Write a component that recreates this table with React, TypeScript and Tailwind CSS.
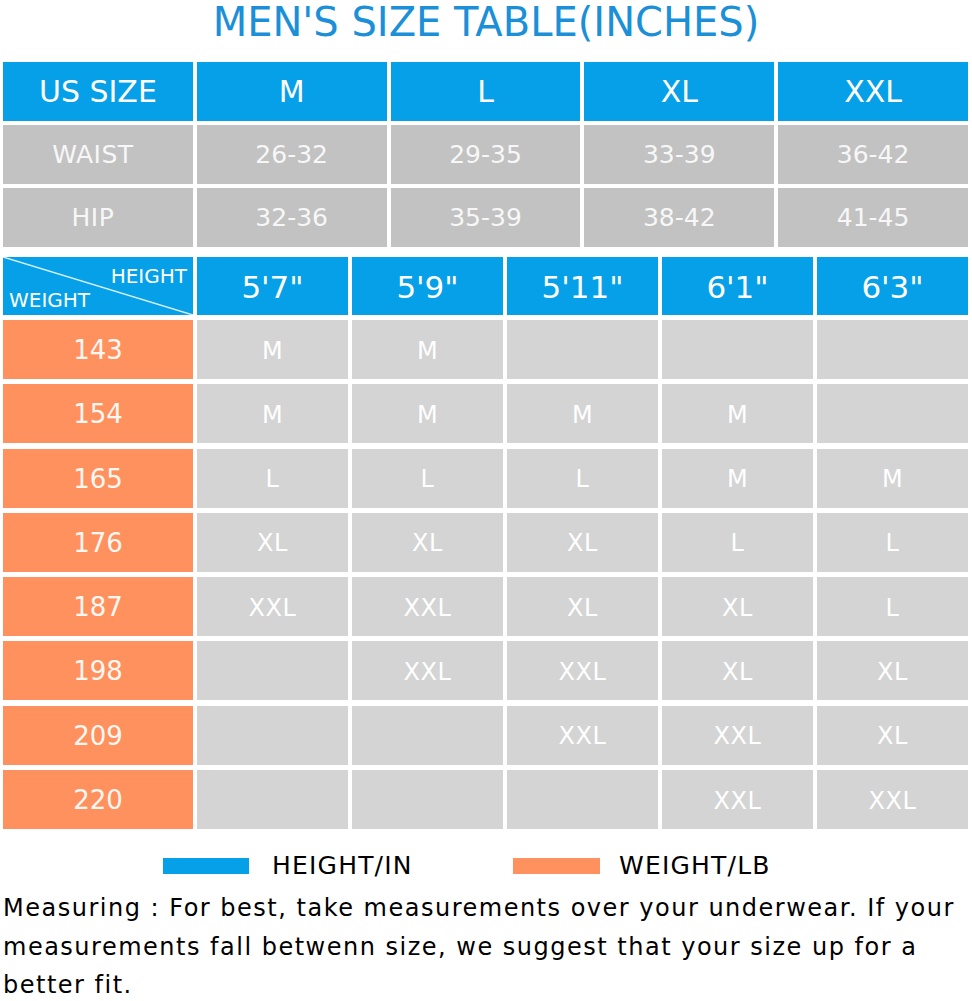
const sizes = ['M', 'L', 'XL', 'XXL']
const waist = ['26-32', '29-35', '33-39', '36-42']
const hip = ['32-36', '35-39', '38-42', '41-45']
const heights = [`5'7"`, `5'9"`, `5'11"`, `6'1"`, `6'3"`]

const chart: [string, string[]][] = [
  ['143', ['M', 'M', '', '', '']],
  ['154', ['M', 'M', 'M', 'M', '']],
  ['165', ['L', 'L', 'L', 'M', 'M']],
  ['176', ['XL', 'XL', 'XL', 'L', 'L']],
  ['187', ['XXL', 'XXL', 'XL', 'XL', 'L']],
  ['198', ['', 'XXL', 'XXL', 'XL', 'XL']],
  ['209', ['', '', 'XXL', 'XXL', 'XL']],
  ['220', ['', '', '', 'XXL', 'XXL']],
]

export default function App() {
  return (
    <div className="w-[972px] h-[1001px] bg-white overflow-hidden font-['DejaVu_Sans','Liberation_Sans',sans-serif]">
      {/* Title */}
      <h1 className="text-center text-[40px] leading-[44px] text-[#1b90d8]">
        MEN'S SIZE TABLE(INCHES)
      </h1>

      {/* Size measurements */}
      <div className="mt-[18px] ml-[3px] w-[965px] grid grid-cols-5 auto-rows-[59px] gap-x-[4px] gap-y-[4px]">
        <div className="bg-[#05a0e8] text-white text-[30px] flex items-center justify-center">US SIZE</div>
        {sizes.map((s) => (
          <div key={s} className="bg-[#05a0e8] text-white text-[30px] flex items-center justify-center">
            {s}
          </div>
        ))}
        <div className="bg-[#c2c2c2] text-[#f7f7f7] text-[25px] tracking-[0.5px] flex items-center justify-center pr-[10px]">WAIST</div>
        {waist.map((w) => (
          <div key={w} className="bg-[#c2c2c2] text-[#f7f7f7] text-[25px] flex items-center justify-center">
            {w}
          </div>
        ))}
        <div className="bg-[#c2c2c2] text-[#f7f7f7] text-[25px] tracking-[0.5px] flex items-center justify-center pr-[10px]">HIP</div>
        {hip.map((h) => (
          <div key={h} className="bg-[#c2c2c2] text-[#f7f7f7] text-[25px] flex items-center justify-center">
            {h}
          </div>
        ))}
      </div>

      {/* Height / weight chart */}
      <div className="mt-[10px] ml-[3px] w-[965px] grid grid-cols-[190px_repeat(5,1fr)] gap-x-[4px]">
        <div className="relative h-[58px] bg-[#05a0e8] text-white text-[20px] leading-[24px] flex flex-col pt-[7px] px-[6px]">
          <svg className="absolute inset-0" width="190" height="58" viewBox="0 0 190 58">
            <line x1="0" y1="0" x2="190" y2="58" stroke="#d6effc" strokeWidth="1.5" />
          </svg>
          <span className="self-end">HEIGHT</span>
          <span className="self-start">WEIGHT</span>
        </div>
        {heights.map((h) => (
          <div key={h} className="h-[58px] bg-[#05a0e8] text-white text-[31px] flex items-center justify-center pt-[3px]">
            {h}
          </div>
        ))}
      </div>

      <div className="mt-[5px] ml-[3px] w-[965px] grid grid-cols-[190px_repeat(5,1fr)] auto-rows-[59px] gap-x-[4px] gap-y-[5.3px]">
        {chart.map(([weight, cells]) => (
          <div key={weight} className="contents">
            <div className="bg-[#ff915f] text-[#fff8f2] text-[26px] flex items-center justify-center pt-[2px]">
              {weight}
            </div>
            {cells.map((c, i) => (
              <div key={i} className="bg-[#d4d4d4] text-white text-[24px] tracking-[0.5px] flex items-center justify-center pt-[2px]">
                {c}
              </div>
            ))}
          </div>
        ))}
      </div>

      {/* Legend */}
      <div className="mt-[22px] pl-[163px] flex items-center text-[25px] leading-[30px] tracking-[1.2px] text-black">
        <div className="w-[350px] flex items-center gap-[23px]">
          <span className="w-[86px] h-[16px] bg-[#05a0e8]" />
          <span>HEIGHT/IN</span>
        </div>
        <div className="flex items-center gap-[19px]">
          <span className="w-[87px] h-[16px] bg-[#ff915f]" />
          <span>WEIGHT/LB</span>
        </div>
      </div>

      {/* Note */}
      <div className="mt-[8px] pl-[3px] text-[24px] leading-[38.5px] tracking-[1.5px] text-black whitespace-nowrap">
        <p>Measuring : For best, take measurements over your underwear. If your</p>
        <p>measurements fall betwenn size, we suggest that your size up for a</p>
        <p>better fit.</p>
      </div>
    </div>
  )
}
